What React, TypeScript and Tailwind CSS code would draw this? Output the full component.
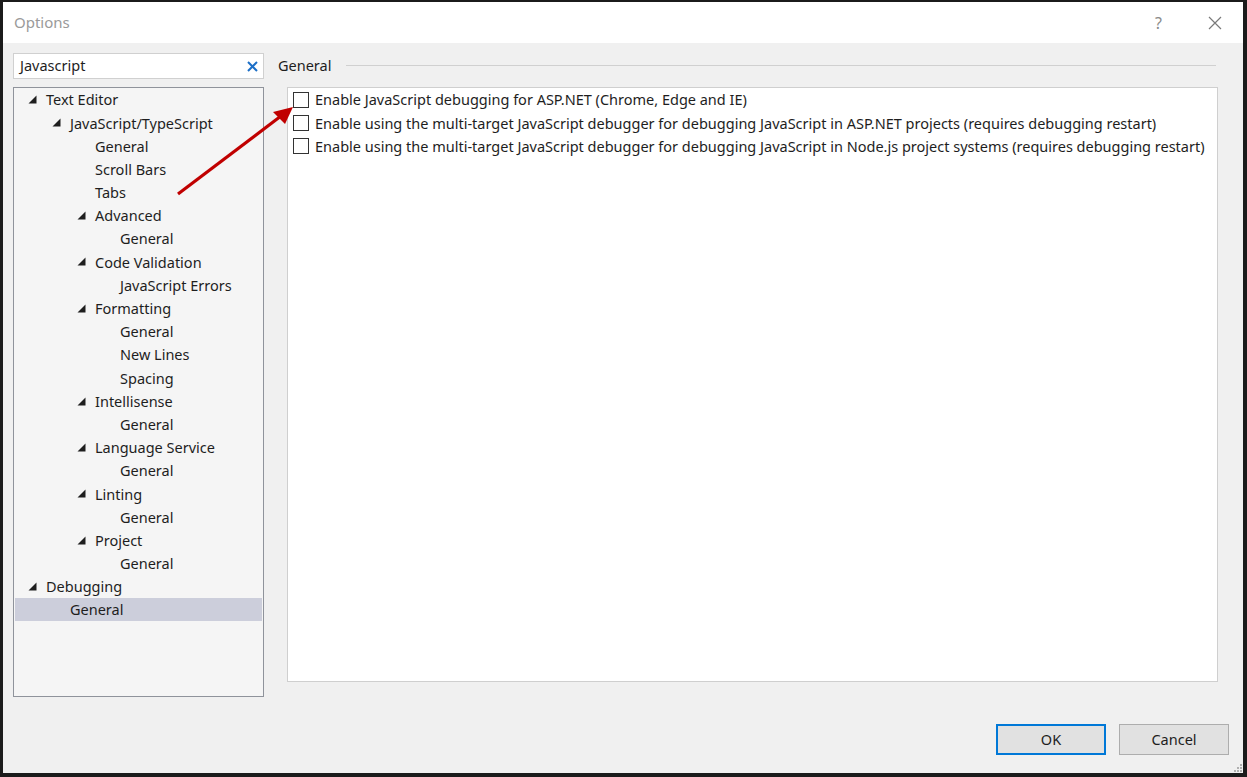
import React from "react";

type Node = { label: string; level: number; expanded?: boolean; selected?: boolean };

const tree: Node[] = [
  { label: "Text Editor", level: 0, expanded: true },
  { label: "JavaScript/TypeScript", level: 1, expanded: true },
  { label: "General", level: 2 },
  { label: "Scroll Bars", level: 2 },
  { label: "Tabs", level: 2 },
  { label: "Advanced", level: 2, expanded: true },
  { label: "General", level: 3 },
  { label: "Code Validation", level: 2, expanded: true },
  { label: "JavaScript Errors", level: 3 },
  { label: "Formatting", level: 2, expanded: true },
  { label: "General", level: 3 },
  { label: "New Lines", level: 3 },
  { label: "Spacing", level: 3 },
  { label: "Intellisense", level: 2, expanded: true },
  { label: "General", level: 3 },
  { label: "Language Service", level: 2, expanded: true },
  { label: "General", level: 3 },
  { label: "Linting", level: 2, expanded: true },
  { label: "General", level: 3 },
  { label: "Project", level: 2, expanded: true },
  { label: "General", level: 3 },
  { label: "Debugging", level: 0, expanded: true },
  { label: "General", level: 1, selected: true },
];

const indents = ["pl-[13px]", "pl-[37px]", "pl-[62px]", "pl-[87px]"];

function Tri() {
  return (
    <svg width="9" height="9" viewBox="0 0 9 9" className="mr-[9px] shrink-0">
      <polygon points="8.5,0.5 8.5,8.5 0.5,8.5" fill="#1e1e1e" />
    </svg>
  );
}

const options = [
  "Enable JavaScript debugging for ASP.NET (Chrome, Edge and IE)",
  "Enable using the multi-target JavaScript debugger for debugging JavaScript in ASP.NET projects (requires debugging restart)",
  "Enable using the multi-target JavaScript debugger for debugging JavaScript in Node.js project systems (requires debugging restart)",
];

export default function App() {
  return (
    <div
      className="relative w-[1247px] h-[777px] flex flex-col border-l-[3px] border-t-[2px] border-r-[4px] border-b-[4px] border-[#1b1b1b] text-[14.5px] text-[#1e1e1e] overflow-hidden"
      style={{ fontFamily: '"Noto Sans", "Open Sans", sans-serif' }}
    >
      <div className="h-[41px] bg-white flex items-center pl-[11px] shrink-0">
        <span className="text-[#9a9a9a] text-[15px]">Options</span>
        <div className="flex-1" />
        <span className="text-[#8a8a8a] text-[16px] mr-[46px]">?</span>
        <svg width="14" height="14" viewBox="0 0 14 14" className="mr-[21px]">
          <path d="M1 1 L13 13 M13 1 L1 13" stroke="#7a7a7a" strokeWidth="1.2" />
        </svg>
      </div>
      <div className="flex-1 flex flex-col bg-[#f0f0f0] pt-[10px] pl-[10px]">
        <div className="flex">
          <div className="w-[251px] flex flex-col shrink-0">
            <div className="h-[26px] bg-white border border-[#d0d0d0] flex items-center pl-[6px] pr-[5px]">
              <span className="flex-1">Javascript</span>
              <svg width="11" height="11" viewBox="0 0 11 11">
                <path d="M1 1 L10 10 M10 1 L1 10" stroke="#1c6fc7" strokeWidth="2" />
              </svg>
            </div>
            <div className="mt-[8px] h-[610px] bg-[#f5f5f5] border border-[#8f939b] px-[1px]">
              {tree.map((n, i) => (
                <div
                  key={i}
                  className={`h-[23.2px] flex items-center ${indents[n.level]} ${n.selected ? "bg-[#cccedb]" : ""}`}
                >
                  {n.expanded ? <Tri /> : <span className="w-[18px] shrink-0" />}
                  <span className="leading-none">{n.label}</span>
                </div>
              ))}
            </div>
          </div>
          <div className="ml-[14px] flex flex-col">
            <div className="h-[24px] mb-[2px] flex items-center">
              <span className="leading-none">General</span>
              <div className="ml-[15px] w-[870px] h-px bg-[#d0d0d0]" />
            </div>
            <div className="mt-[8px] ml-[9px] w-[931px] h-[595px] bg-white border border-[#cfcfcf] pl-[5px]">
              {options.map((o, i) => (
                <div key={i} className="h-[23.4px] flex items-center">
                  <div className="w-[16px] h-[16px] border border-[#333333] bg-white mr-[6px] shrink-0" />
                  <span className="leading-none whitespace-nowrap">{o}</span>
                </div>
              ))}
            </div>
          </div>
        </div>
        <div className="mt-[27px] flex justify-end pr-[14px] gap-[13px]">
          <div className="w-[110px] h-[31px] bg-[#e1e1e1] border-2 border-[#0078d7] flex items-center justify-center">
            OK
          </div>
          <div className="w-[110px] h-[31px] bg-[#e1e1e1] border border-[#adadad] flex items-center justify-center">
            Cancel
          </div>
        </div>
      </div>
      <svg width="10" height="10" viewBox="0 0 10 10" className="absolute right-[1px] bottom-[1px]">
        {[
          [8, 2],
          [5, 5],
          [8, 5],
          [2, 8],
          [5, 8],
          [8, 8],
        ].map(([x, y], i) => (
          <rect key={i} x={x} y={y} width="2" height="2" fill="#b0b0b0" />
        ))}
      </svg>
      <svg className="absolute left-0 top-0 pointer-events-none" width="1247" height="777">
        <line x1="175" y1="192" x2="278" y2="114" stroke="#c00000" strokeWidth="3.2" />
        <polygon points="290,105 270,110 282,122" fill="#c00000" />
      </svg>
    </div>
  );
}
